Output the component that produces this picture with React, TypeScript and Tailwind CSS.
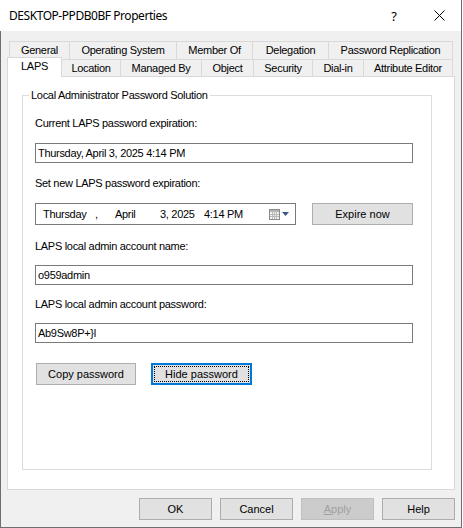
import React from "react";

const UI = { fontFamily: '"Liberation Sans", Arial, sans-serif' };
const TITLE = { fontFamily: '"Noto Sans", "Open Sans", sans-serif' };

const row1 = [
  { label: "General", cls: "w-[60px] border-l" },
  { label: "Operating System", cls: "w-[107px] border-l" },
  { label: "Member Of", cls: "w-[76px] border-l" },
  { label: "Delegation", cls: "w-[76px] border-l" },
  { label: "Password Replication", cls: "w-[125px] border-l border-r" },
];

const row2 = [
  { label: "Location", cls: "w-[59px]" },
  { label: "Managed By", cls: "w-[81px]" },
  { label: "Object", cls: "w-[52px]" },
  { label: "Security", cls: "w-[59px]" },
  { label: "Dial-in", cls: "w-[51px]" },
  { label: "Attribute Editor", cls: "w-[89px]" },
];

function Label({ children }: { children: React.ReactNode }) {
  return <div className="h-[13px] text-[11px] leading-[13px] tracking-[-0.3px] text-black whitespace-nowrap">{children}</div>;
}

function TextBox({ value, cls }: { value: string; cls: string }) {
  return (
    <div className={`${cls} flex h-[20px] w-[378px] items-center border border-[#7a7a7a] bg-white pl-[2px] text-[11px] leading-[13px] tracking-[-0.3px] text-black whitespace-nowrap`}>
      {value}
    </div>
  );
}

function Btn({ children, cls }: { children: React.ReactNode; cls: string }) {
  return (
    <div className={`${cls} flex h-[22px] items-center justify-center border border-[#adadad] bg-[#e1e1e1] text-[11px] leading-[13px] text-black whitespace-nowrap`}>
      {children}
    </div>
  );
}

function CalendarIcon() {
  return (
    <svg width="11" height="11" viewBox="0 0 11 11" className="block">
      <rect x="0.5" y="0.5" width="10" height="10" fill="#f4f4f4" stroke="#8c8c8c" />
      <rect x="1" y="1" width="9" height="2" fill="#b5b5b5" />
      <path d="M1 5.5H10M1 7.5H10M3.5 3V10M5.5 3V10M7.5 3V10" stroke="#b9b9b9" strokeWidth="1" />
    </svg>
  );
}

export default function App() {
  return (
    <div className="flex h-[528px] w-[463px] bg-white" style={UI}>
      <div className="flex h-[528px] w-[462px] flex-col border-r border-b border-[#6e6e6e]">
        {/* Title bar */}
        <div className="flex h-[31px] shrink-0 items-center bg-white pl-[9px] text-black">
          <span className="text-[12px] leading-[16px] tracking-[-0.45px]" style={TITLE}>DESKTOP-PPDB0BF Properties</span>
          <div className="flex-1" />
          <span className="mr-[37px] text-[13px] leading-[16px]" style={TITLE}>?</span>
          <svg width="11" height="11" viewBox="0 0 11 11" className="mr-[16px] block">
            <path d="M0.5 0.5L10.5 10.5M10.5 0.5L0.5 10.5" stroke="#000" strokeWidth="1" />
          </svg>
        </div>

        {/* Body */}
        <div className="flex flex-1 flex-col border-l border-[#6e6e6e] bg-[#f0f0f0] pt-[10px]">
          {/* Tab row 1 */}
          <div className="ml-[8px] flex h-[18px]">
            {row1.map((t) => (
              <div
                key={t.label}
                className={`${t.cls} flex h-full justify-center border-t border-[#d9d9d9] bg-[#f0f0f0] pt-[2px] text-[11px] leading-[13px] tracking-[-0.3px] text-black whitespace-nowrap`}
              >
                {t.label}
              </div>
            ))}
          </div>
          {/* Tab row 2 */}
          <div className="relative z-10 mt-[-2px] ml-[6px] flex h-[19px] items-end">
            <div className="mb-[-1px] flex h-[20px] w-[55px] justify-center border-l border-t border-r border-[#d9d9d9] bg-white pt-[2px] text-[11px] leading-[13px] tracking-[-0.3px] text-black">
              LAPS
            </div>
            {row2.map((t) => (
              <div
                key={t.label}
                className={`${t.cls} flex h-[17px] justify-center border-t border-r border-[#d9d9d9] bg-[#f0f0f0] pt-[2px] text-[11px] leading-[13px] tracking-[-0.3px] text-black whitespace-nowrap`}
              >
                {t.label}
              </div>
            ))}
          </div>

          {/* Panel */}
          <div className="ml-[6px] h-[414px] w-[448px] shrink-0 border border-[#d9d9d9] bg-white">
            <fieldset className="mt-[11px] ml-[14px] w-[410px] border border-[#dcdcdc] pb-[84px]">
              <legend className="ml-[6px] px-[2px] text-[11px] leading-[14px] tracking-[-0.3px] text-black">
                Local Administrator Password Solution
              </legend>
              <div className="flex flex-col pl-[12px]">
                <div className="mt-[15px]">
                  <Label>Current LAPS password expiration:</Label>
                </div>
                <TextBox cls="mt-[13px]" value="Thursday, April 3, 2025 4:14 PM" />
                <div className="mt-[14px]">
                  <Label>Set new LAPS password expiration:</Label>
                </div>
                <div className="mt-[13px] flex gap-[16px]">
                  <div className="flex h-[22px] w-[261px] items-center border border-[#7a7a7a] bg-white pl-[7px] text-[11px] leading-[13px] tracking-[-0.3px] text-black whitespace-nowrap">
                    <span className="inline-block w-[52px]">Thursday</span>
                    <span className="inline-block w-[20px]">,</span>
                    <span className="inline-block w-[45px]">April</span>
                    <span className="inline-block w-[44px]">3, 2025</span>
                    <span className="inline-block w-[65px]">4:14 PM</span>
                    <CalendarIcon />
                    <svg width="7" height="4" viewBox="0 0 7 4" className="ml-[2px] block">
                      <path d="M0 0H7L3.5 4Z" fill="#3d5a80" />
                    </svg>
                  </div>
                  <Btn cls="w-[101px]">Expire now</Btn>
                </div>
                <div className="mt-[15px]">
                  <Label>LAPS local admin account name:</Label>
                </div>
                <TextBox cls="mt-[12px]" value="o959admin" />
                <div className="mt-[13px]">
                  <Label>LAPS local admin account password:</Label>
                </div>
                <TextBox cls="mt-[12px]" value="Ab9Sw8P+}l" />
                <div className="mt-[20px] flex gap-[15px] pl-[1px]">
                  <Btn cls="w-[100px]">Copy password</Btn>
                  <div className="flex h-[22px] w-[101px] items-center justify-center border-2 border-[#0078d7] bg-[#e1e1e1] p-[1px]">
                    <div className="flex h-full w-full items-center justify-center border border-dotted border-black text-[11px] leading-[13px] text-black whitespace-nowrap">
                      Hide password
                    </div>
                  </div>
                </div>
              </div>
            </fieldset>
          </div>

          {/* Bottom buttons */}
          <div className="mt-[8px] flex justify-end gap-[8px] pr-[6px]">
            <Btn cls="w-[73px]">OK</Btn>
            <Btn cls="w-[73px]">Cancel</Btn>
            <div className="flex h-[22px] w-[73px] items-center justify-center border border-[#bfbfbf] bg-[#cccccc] text-[11px] leading-[13px] text-[#a0a0a0]">
              <span className="underline">A</span>pply
            </div>
            <Btn cls="w-[73px]">Help</Btn>
          </div>
        </div>
      </div>
    </div>
  );
}
